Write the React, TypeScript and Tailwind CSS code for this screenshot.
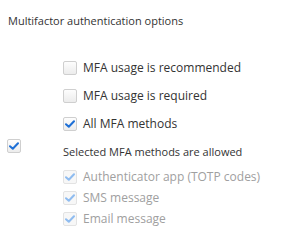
import React from "react";

function Box({ checked, disabled }: { checked?: boolean; disabled?: boolean }) {
  return (
    <span
      className={
        "flex h-[14px] w-[14px] shrink-0 items-center justify-center rounded-[2px] border " +
        (disabled ? "border-[#e3e3e3] bg-[#f7f7f7]" : "border-[#cfcfcf] bg-gradient-to-b from-[#fdfdfd] to-[#ececec]")
      }
    >
      {checked && (
        <svg width="10" height="8" viewBox="0 0 10 8">
          <path
            d="M1 4.2 L3.8 6.8 L9 1.2"
            fill="none"
            stroke={disabled ? "#8fbcf0" : "#1d6fd6"}
            strokeWidth="2"
            strokeLinecap="round"
            strokeLinejoin="round"
          />
        </svg>
      )}
    </span>
  );
}

export default function App() {
  return (
    <div className="h-[248px] w-[307px] bg-white font-['Open_Sans',sans-serif] text-[#333]">
      <div className="pl-[8px] pt-[13px] text-[11px] leading-[16px]">Multifactor authentication options</div>
      <div className="mt-[25px] flex flex-col pl-[63px] text-[12px] leading-[14px] text-[#333]">
        <div className="flex h-[28px] items-center gap-[6px]">
          <Box />
          <span>MFA usage is recommended</span>
        </div>
        <div className="flex h-[28px] items-center gap-[6px]">
          <Box />
          <span>MFA usage is required</span>
        </div>
        <div className="flex h-[28px] items-center gap-[6px]">
          <Box checked />
          <span>All MFA methods</span>
        </div>
      </div>
      <div className="mt-[1px] flex">
        <div className="w-[63px] pl-[7px]">
          <Box checked />
        </div>
        <div className="flex flex-col">
          <div className="mt-[6px] text-[11px] leading-[14px] text-[#333]">Selected MFA methods are allowed</div>
          <div className="mt-[7px] flex flex-col text-[12px] leading-[14px] text-[#a0a0a0]">
            <div className="flex h-[21px] items-center gap-[6px]">
              <Box checked disabled />
              <span>Authenticator app (TOTP codes)</span>
            </div>
            <div className="flex h-[21px] items-center gap-[6px]">
              <Box checked disabled />
              <span>SMS message</span>
            </div>
            <div className="flex h-[21px] items-center gap-[6px]">
              <Box checked disabled />
              <span>Email message</span>
            </div>
          </div>
        </div>
      </div>
    </div>
  );
}
